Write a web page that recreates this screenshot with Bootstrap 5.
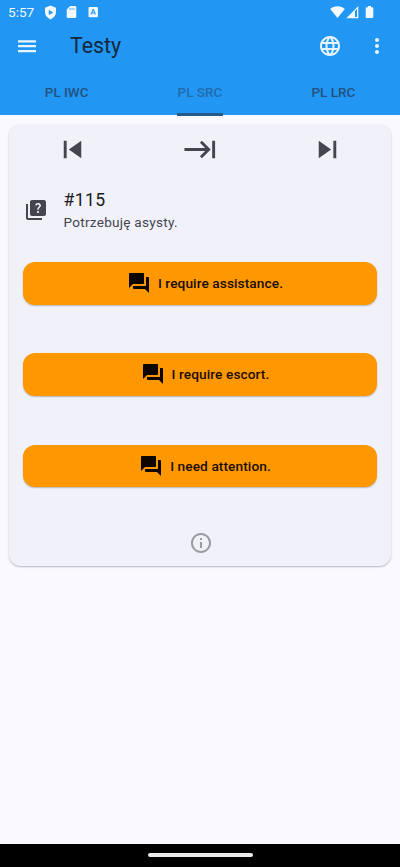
<!DOCTYPE html>
<html lang="pl">
<head>
<meta charset="utf-8">
<meta name="viewport" content="width=device-width, initial-scale=1">
<title>Testy</title>
<link href="https://cdn.jsdelivr.net/npm/bootstrap@5.3.0/dist/css/bootstrap.min.css" rel="stylesheet">
<style>
  body { font-family: Roboto, "Noto Sans", sans-serif; background: #f9f9ff; color: #1a1b20; height: 867px; overflow: hidden; }
  svg { display: block; fill: currentColor; flex: none; }
  .app-head { background: #2196f3; height: 115px; }
  .status { height: 24px; color: #f2faff; font-size: 13.6px; line-height: 24px; padding-left: 8px; padding-right: 26px; }
  .status-time { width: 36px; }
  .status-sd { margin-left: 8px; }
  .status-a { margin-left: 10px; }
  .status-signal { margin-left: 1px; }
  .status-battery { margin-left: 6px; }
  .toolbar { height: 45px; color: #e9f5ff; padding: 0 11px 1px 15px; }
  .app-title { font-size: 21.4px; line-height: 28px; margin-left: 31px; color: #14283c; font-weight: 400; }
  .more { margin-left: 23px; }
  .tabs { height: 46px; }
  .tab-item { flex: 1 1 0; font-size: 13.5px; font-weight: 500; color: #23527e; line-height: 47px; text-align: center; text-decoration: none; }
  .tab-item.current { color: #226cab; }
  .tab-item span { display: inline-block; height: 47px; }
  .tab-item.current span { border-bottom: 3px solid #245b8c; width: 46px; white-space: nowrap; }
  .quiz { margin: 9px 9px 0; height: 442px; border-radius: 12px; background: #f1f1fa; box-shadow: 0 1px 2px rgba(0,0,0,.27); color: #44464f; padding: 0 14px; }
  .steps { height: 52px; padding: 0 32px 1px; }
  .question { height: 86px; padding-left: 1px; }
  .q-icon { margin-top: 22px; }
  .q-body { margin: 13px 0 0 15.500px; }
  .q-num { font-size: 17.6px; line-height: 23px; color: #1a1b20; letter-spacing: .4px; }
  .q-text { font-size: 13.6px; line-height: 21px; letter-spacing: .25px; }
  .answer { height: 42.600px; background: #ff9800; color: #1a0d00; border: 0; border-radius: 12px; font-size: 13.7px; font-weight: 500; box-shadow: 0 1px 1.500px rgba(0,0,0,.25); padding: 0 0 0 10px; letter-spacing: .08px; gap: 7px; }
  .answer svg { color: #0d0500; margin-bottom: 1px; }
  .answers { gap: 48.8px; }
  .info { color: #9a9aa0; margin: 43.500px 0 0 2px; }
  .nav-pill { height: 23.500px; background: #000; }
  .nav-pill div { width: 105px; height: 4px; border-radius: 2px; background: #ebebeb; }
</style>
<script src="https://cdn.jsdelivr.net/npm/bootstrap@5.3.0/dist/js/bootstrap.bundle.min.js"></script>
</head>
<body class="d-flex flex-column">
<header class="app-head flex-shrink-0">
  <div class="status d-flex align-items-center">
    <span class="status-time">5:57</span>
    <svg width="13" height="15" viewBox="0 0 13 15"><path fill-rule="evenodd" d="M6.500.6 12 2.700v4.400c0 3.500-2.200 6-5.500 7.300C3.200 13.100 1 10.600 1 7.100V2.700zM4.800 4.700v5.400l4.300-2.700z"/></svg>
    <svg class="status-sd" width="13" height="14" viewBox="0 0 13 14"><path fill-rule="evenodd" d="M5.200 1H10a1.300 1.300 0 0 1 1.300 1.300v9.400A1.300 1.300 0 0 1 10 13H3a1.300 1.300 0 0 1-1.300-1.300V4.500zM4.500 3.200v1.600h1V3.200zm2 0v1.600h1V3.200zm2 0v1.600h1V3.200z"/></svg>
    <svg class="status-a" width="11" height="12" viewBox="0 0 11 12"><path fill-rule="evenodd" d="M1.500 1h7.400a1 1 0 0 1 1 1v8.200a1 1 0 0 1-1 1H1.500a1 1 0 0 1-1-1V2a1 1 0 0 1 1-1zM4.700 3 2.400 8.500h1.200l.4-1.100h2.400l.4 1.100H8L5.700 3zm.5 1.400.8 2.100H4.400z"/></svg>
    <svg class="ms-auto" width="15" height="14" viewBox="0 0 15 14"><path d="M7.500 13 .2 3.900C2.200 2.200 4.700 1.300 7.500 1.300s5.300.9 7.300 2.600z"/></svg>
    <svg class="status-signal" width="13" height="14" viewBox="0 0 13 14"><path fill-rule="evenodd" d="M.3 13.200 12.300 1.100v12.100zM9 5.900v6.200h2V3.900z"/></svg>
    <svg class="status-battery" width="9" height="14" viewBox="0 0 9 14"><path d="M3 1h3v1.300h1.500c.4 0 .8.300.8.800v9.200c0 .5-.4.800-.8.800h-6c-.5 0-.8-.3-.8-.8V3.100c0-.5.3-.8.800-.8H3z"/></svg>
  </div>
  <div class="toolbar d-flex align-items-center">
    <svg width="24" height="24" viewBox="0 0 24 24"><path d="M3 18.200h18v-2.200H3zm0-4.900h18v-2.200H3zm0-7.100v2.200h18V6.200z"/></svg>
    <h1 class="app-title mb-0">Testy</h1>
    <svg class="ms-auto" width="24" height="24" viewBox="0 0 24 24"><path d="M11.990 2C6.470 2 2 6.480 2 12s4.470 10 9.990 10C17.520 22 22 17.520 22 12S17.520 2 11.990 2zm6.930 6h-2.950c-.32-1.250-.78-2.450-1.380-3.560 1.840.63 3.370 1.910 4.330 3.560zM12 4.040c.83 1.200 1.480 2.530 1.910 3.960h-3.820c.43-1.430 1.080-2.760 1.910-3.960zM4.260 14C4.100 13.360 4 12.690 4 12s.1-1.360.26-2h3.380c-.08.66-.14 1.320-.14 2s.06 1.340.14 2H4.260zm.82 2h2.950c.32 1.250.78 2.450 1.380 3.560-1.840-.63-3.370-1.900-4.330-3.560zm2.950-8H5.080c.96-1.660 2.490-2.930 4.330-3.560C8.810 5.550 8.350 6.750 8.030 8zM12 19.960c-.83-1.200-1.480-2.530-1.910-3.960h3.820c-.43 1.430-1.080 2.760-1.910 3.960zM14.340 14H9.660c-.09-.66-.16-1.320-.16-2s.07-1.350.16-2h4.680c.09.65.16 1.320.16 2s-.07 1.340-.16 2zm.25 5.560c.6-1.110 1.060-2.310 1.380-3.560h2.950c-.96 1.650-2.490 2.930-4.330 3.560zM16.360 14c.08-.66.14-1.320.14-2s-.06-1.340-.14-2h3.380c.16.64.26 1.310.26 2s-.1 1.360-.26 2h-3.380z"/></svg>
    <svg class="more" width="24" height="24" viewBox="0 0 24 24"><path d="M12 8c1.100 0 2-.9 2-2s-.9-2-2-2-2 .9-2 2 .9 2 2 2zm0 2c-1.100 0-2 .9-2 2s.9 2 2 2 2-.9 2-2-.9-2-2-2zm0 6c-1.100 0-2 .9-2 2s.9 2 2 2 2-.9 2-2-.9-2-2-2z"/></svg>
  </div>
  <nav class="tabs d-flex">
    <a class="tab-item"><span>PL IWC</span></a>
    <a class="tab-item current"><span>PL SRC</span></a>
    <a class="tab-item"><span>PL LRC</span></a>
  </nav>
</header>
<main class="flex-grow-1">
  <section class="quiz">
    <div class="steps d-flex align-items-center justify-content-between">
      <svg width="35" height="35" viewBox="0 0 24 24"><path d="M6 6h2v12H6zm3.500 6 8.500 6V6z"/></svg>
      <svg width="35" height="35" viewBox="0 0 24 24"><path d="M11.590 7.410 15.170 11H1v2h14.170l-3.590 3.590L13 18l6-6-6-6-1.410 1.410zM20 6v12h2V6h-2z"/></svg>
      <svg width="35" height="35" viewBox="0 0 24 24"><path d="m6 18 8.500-6L6 6v12zM16 6v12h2V6h-2z"/></svg>
    </div>
    <div class="question d-flex">
      <svg class="q-icon" width="24" height="24" viewBox="0 0 24 24"><path d="M4 6H2v14c0 1.100.9 2 2 2h14v-2H4V6zm16-4H8c-1.100 0-2 .9-2 2v12c0 1.100.9 2 2 2h12c1.100 0 2-.9 2-2V4c0-1.100-.9-2-2-2zm-5.990 13c-.59 0-1.050-.47-1.050-1.050 0-.59.47-1.040 1.050-1.040.59 0 1.040.45 1.040 1.040-.01.58-.45 1.050-1.040 1.050zm2.500-6.170c-.63.93-1.230 1.210-1.560 1.810-.13.24-.18.4-.18 1.180h-1.520c0-.41-.06-1.080.26-1.650.41-.73 1.180-1.160 1.630-1.800.48-.68.21-1.940-1.140-1.940-.88 0-1.320.67-1.500 1.230l-1.370-.57C11.510 5.960 12.520 5 13.990 5c1.230 0 2.080.56 2.510 1.260.37.61.58 1.730.01 2.570z"/></svg>
      <div class="q-body">
        <div class="q-num">#115</div>
        <div class="q-text">Potrzebuję asysty.</div>
      </div>
    </div>
    <div class="answers d-grid">
      <button class="answer btn d-flex align-items-center justify-content-center"><svg width="24" height="24" viewBox="0 0 24 24"><path d="M21 6h-2v9H6v2c0 .55.45 1 1 1h11l4 4V7c0-.55-.45-1-1-1zm-4 6V3c0-.55-.45-1-1-1H3c-.55 0-1 .45-1 1v14l4-4h10c.55 0 1-.45 1-1z"/></svg>I require assistance.</button>
      <button class="answer btn d-flex align-items-center justify-content-center"><svg width="24" height="24" viewBox="0 0 24 24"><path d="M21 6h-2v9H6v2c0 .55.45 1 1 1h11l4 4V7c0-.55-.45-1-1-1zm-4 6V3c0-.55-.45-1-1-1H3c-.55 0-1 .45-1 1v14l4-4h10c.55 0 1-.45 1-1z"/></svg>I require escort.</button>
      <button class="answer btn d-flex align-items-center justify-content-center"><svg width="24" height="24" viewBox="0 0 24 24"><path d="M21 6h-2v9H6v2c0 .55.45 1 1 1h11l4 4V7c0-.55-.45-1-1-1zm-4 6V3c0-.55-.45-1-1-1H3c-.55 0-1 .45-1 1v14l4-4h10c.55 0 1-.45 1-1z"/></svg>I need attention.</button>
    </div>
    <div class="info d-flex justify-content-center"><svg width="24" height="24" viewBox="0 0 24 24"><path d="M11 7h2v2h-2zm0 4h2v6h-2zm1-9C6.480 2 2 6.480 2 12s4.480 10 10 10 10-4.480 10-10S17.520 2 12 2zm0 18c-4.410 0-8-3.590-8-8s3.590-8 8-8 8 3.590 8 8-3.590 8-8 8z"/></svg></div>
  </section>
</main>
<footer class="nav-pill d-flex align-items-center justify-content-center flex-shrink-0"><div></div></footer>
</body>
</html>
